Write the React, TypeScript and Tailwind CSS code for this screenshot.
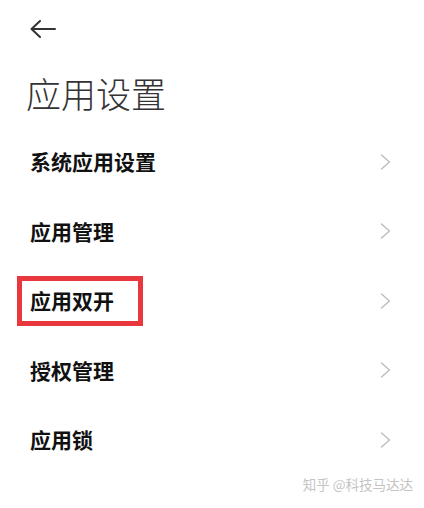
const items = ["系统应用设置", "应用管理", "应用双开", "授权管理", "应用锁"]

function Chevron() {
    return (
        <svg width="11" height="16" viewBox="0 0 11 16" fill="none">
            <polyline points="1.5,1 9.5,8 1.5,15" stroke="#bdbdbd" strokeWidth="1.4" strokeLinecap="round" strokeLinejoin="round" />
        </svg>
    )
}

export default function App() {
    return (
        <div
            className="relative h-[508px] w-[424px] overflow-hidden bg-white"
            style={{ fontFamily: '"Noto Sans CJK SC", "Noto Sans", sans-serif' }}
        >
            <div className="flex h-[58px] items-center pl-[30px]">
                <svg width="26" height="18" viewBox="0 0 26 18" fill="none">
                    <path d="M1.5 9H25M10 1L1.5 9L10 17" stroke="#333" strokeWidth="2" strokeLinecap="round" strokeLinejoin="round" />
                </svg>
            </div>
            <div className="flex h-[68px] items-center pl-[26px]">
                <h1 className="text-[35px] font-light leading-none text-[#333]">应用设置</h1>
            </div>
            <ul className="pt-[1px]">
                {items.map((label) => (
                    <li key={label} className="relative flex h-[69.5px] items-center justify-between pl-[30px] pr-[33px]">
                        <span className="text-[21px] font-bold leading-none text-[#111]">{label}</span>
                        <Chevron />
                        {label === "应用双开" && (
                            <div className="absolute left-[17px] top-[10px] h-[50px] w-[126px] border-[5px] border-[#e8383d]" />
                        )}
                    </li>
                ))}
            </ul>
            <div className="flex h-[20px] items-center justify-end pr-[11px]">
                <span className="text-[13.5px] leading-none text-[#c4c4c4]">知乎 @科技马达达</span>
            </div>
        </div>
    )
}
